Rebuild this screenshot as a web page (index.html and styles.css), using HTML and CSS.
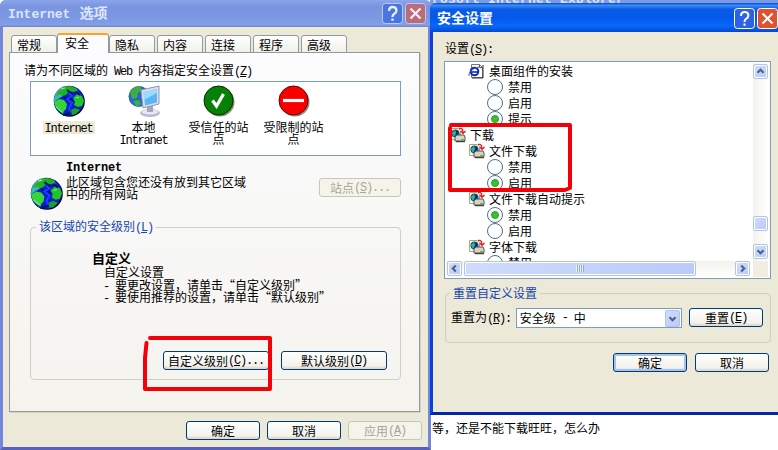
FILE: index.html
```
<!DOCTYPE html>
<html lang="zh-CN">
<head>
    <meta charset="UTF-8">
    <title>Internet 选项</title>
    <link rel="stylesheet" href="styles.css">
</head>
<body>
    <svg class="defs" width="0" height="0">
        <symbol id="globe" viewBox="0 0 32 32">
            <circle cx="16.5" cy="16.5" r="15.3" fill="#002"/>
            <circle cx="15.7" cy="15.7" r="15" fill="#0a1fc4"/>
            <path d="M1 14C2 7 7 2 13 1l3 2-5 3-1 5-5 3-4 3z" fill="#3ab9b0"/>
            <path d="M5 7l6-5 6-1 6 2 2 3-5 1-4-1-3 4-4 1-2-2-4 2z" fill="#22b21c"/>
            <path d="M1 17l5-3 5 1 3 4-1 5-2 2-1 3-5-4-3-4z" fill="#35d437"/>
            <path d="M20 13l4-4 5 2 2 5-2 5-4 1-4-2 1-3z" fill="#21c427"/>
            <path d="M18 25l4-2 5 2-4 4-4 1z" fill="#1aa320"/>
            <path d="M14 5l5 4-2 4 3 3M11 12l5 3M22 7l5 3M10 30l7-2" stroke="#031274" stroke-width="2" fill="none"/>
            <path d="M15 8l4 3-5 3 5 4-3 5 2 4" stroke="#1740ff" stroke-width="2" fill="none"/>
            <path d="M3 22l6 5M8 4l4-1M23 13l3-1" stroke="#8ff29a" fill="none"/>
        </symbol>
        <symbol id="dl" viewBox="0 0 17 16">
            <path d="M1.5 1.5h8l2 2v9h-10z" fill="#fffce6" stroke="#aaa476"/>
            <circle cx="6.5" cy="6.5" r="4" fill="#15498a"/>
            <path d="M3 6l3-3 1 3-2 4z" fill="#29b7a1"/>
            <path d="M8 4v6" stroke="#021" />
            <path d="M6 10l2-2h7l1 2v4H6z" fill="#d6d4c3" stroke="#55554b"/>
            <path d="M7 14.700h9" stroke="#222"/>
            <path d="M12.500 12.500h2" stroke="#2a2"/>
            <path d="M10 1.500q4-1 4 4M12 4l2 2.500L16.500 4" fill="none" stroke="#e8202a" stroke-width="1.300"/>
        </symbol>
    </svg>

    <div class="behind">rosoft Internet Explorer</div>
    <p class="note">等，还是不能下载旺旺，怎么办</p>

    <div class="win options">
        <div class="title">
            <h1><span class="en">Internet</span>选项</h1>
            <svg class="cap" viewBox="0 0 21 21"><rect x=".5" y=".5" width="20" height="20" rx="3" fill="#4c74e0" stroke="#b8cbf6"/><path d="M7 8q0-4 3.700-4t3.700 3.500q0 2-2 3.200T10.500 14M10.500 15.500v2.300" fill="none" stroke="#e7efff" stroke-width="2.300"/></svg>
            <svg class="cap" viewBox="0 0 21 21"><rect x=".5" y=".5" width="20" height="20" rx="3" fill="#bc6b78" stroke="#b8cbf6"/><path d="M5.500 5.500l10 10M15.500 5.500l-10 10" stroke="#f5eef5" stroke-width="2.300"/></svg>
        </div>
        <div class="tabs">
            <span>常规</span><span class="on">安全</span><span>隐私</span><span>内容</span><span>连接</span><span>程序</span><span>高级</span>
        </div>
        <div class="panel">
            <p class="hint">请为不同区域的<i> Web </i>内容指定安全设置<i>(<u>Z</u>)</i></p>
            <div class="zones">
                <div class="zone sel">
                    <svg><use href="#globe"/></svg>
                    <p><i>Internet</i></p>
                </div>
                <div class="zone">
                    <svg viewBox="0 0 32 32">
                        <circle cx="11" cy="11.500" r="10.500" fill="#2468c9"/>
                        <path d="M2 7q4-6 10-6l2 4-4 3-1 5-5 1zM5 16l6-1 2 4-4 3z" fill="#3fae3e"/>
                        <ellipse cx="22" cy="28" rx="10" ry="4" fill="#b9b9cf"/>
                        <ellipse cx="22" cy="27" rx="8" ry="2.500" fill="#e8e8f3"/>
                        <path d="M19 21h6v6h-6z" fill="#a5a6c2"/>
                        <path d="M13 5l18-4v18l-16 4z" fill="#dcdff0" stroke="#9093b7"/>
                        <path d="M15.500 7L29 4v13.500L17 20.500z" fill="#5bb5f4"/>
                        <path d="M15.500 7L29 4v4L16 15z" fill="#9adbfb"/>
                    </svg>
                    <p>本地<br><i>Intranet</i></p>
                </div>
                <div class="zone">
                    <svg viewBox="0 0 32 32"><circle cx="17" cy="17" r="14.500" fill="#8d8a7c"/><circle cx="15.500" cy="15.500" r="14.500" fill="#078007" stroke="#032d03"/><path d="M9.500 15.500l4 5.500 7-12" fill="none" stroke="#fff" stroke-width="3.200"/></svg>
                    <p>受信任的站<br>点</p>
                </div>
                <div class="zone">
                    <svg viewBox="0 0 32 32"><circle cx="17" cy="17" r="14.500" fill="#8d8a7c"/><circle cx="15.500" cy="15.500" r="14.500" fill="#fb0000" stroke="#5c0808"/><path d="M5 15.500h21" stroke="#fff" stroke-width="3.200"/></svg>
                    <p>受限制的站<br>点</p>
                </div>
            </div>
            <div class="about">
                <svg><use href="#globe"/></svg>
                <div class="desc">
                    <b class="en">Internet</b>
                    <p>此区域包含您还没有放到其它区域<br>中的所有网站</p>
                </div>
                <span class="btn off wide">站点<i>(<u>S</u>)...</i></span>
            </div>
            <div class="group level">
                <span class="legend">该区域的安全级别<i>(<u>L</u>)</i></span>
                <h2>自定义</h2>
                <p class="custom">自定义设置</p>
                <p class="custom"><i>- </i>要更改设置，请单击“自定义级别”<br><i>- </i>要使用推荐的设置，请单击“默认级别”</p>
                <div class="row">
                    <span class="btn">自定义级别<i>(<u>C</u>)...</i></span>
                    <span class="btn">默认级别<i>(<u>D</u>)</i></span>
                </div>
            </div>
        </div>
        <div class="foot">
            <span class="btn">确定</span>
            <span class="btn">取消</span>
            <span class="btn off">应用<i>(<u>A</u>)</i></span>
        </div>
    </div>

    <div class="win settings">
        <div class="title">
            <h1>安全设置</h1>
            <svg class="cap" viewBox="0 0 21 21"><rect x=".5" y=".5" width="20" height="20" rx="3" fill="#2f61e8" stroke="#fff"/><path d="M7 8q0-4 3.700-4t3.700 3.500q0 2-2 3.200T10.500 14M10.500 15.500v2.300" fill="none" stroke="#fff" stroke-width="2"/></svg>
            <svg class="cap" viewBox="0 0 21 21"><rect x=".5" y=".5" width="20" height="20" rx="3" fill="#e2512d" stroke="#fff"/><path d="M5.500 5.500l10 10M15.500 5.500l-10 10" stroke="#fff" stroke-width="2.200"/></svg>
        </div>
        <p class="label">设置<i>(<u>S</u>):</i></p>
        <div class="list">
            <div class="items">
                <div class="item sub">
                    <svg viewBox="0 0 17 16"><path d="M3.500 1.500h8l3 3v10h-11z" fill="#fff" stroke="#777"/><path d="M11.500 1.500v3h3" fill="none" stroke="#555"/><path d="M15 2v13H4" fill="none" stroke="#333"/><circle cx="6.500" cy="8.500" r="3.800" fill="none" stroke="#1528b4" stroke-width="2"/><path d="M3 9h7.500" stroke="#1528b4" stroke-width="1.600"/><path d="M1 13q-1-3 3-6t7-3" stroke="#3a62e0" fill="none"/></svg>桌面组件的安装
                </div>
                <div class="item"><span class="radio"></span>禁用</div>
                <div class="item"><span class="radio"></span>启用</div>
                <div class="item"><span class="radio on"></span>提示</div>
                <div class="item top"><svg><use href="#dl"/></svg>下载</div>
                <div class="item sub"><svg><use href="#dl"/></svg>文件下载</div>
                <div class="item"><span class="radio"></span>禁用</div>
                <div class="item"><span class="radio on"></span>启用</div>
                <div class="item sub"><svg><use href="#dl"/></svg>文件下载自动提示</div>
                <div class="item"><span class="radio on"></span>禁用</div>
                <div class="item"><span class="radio"></span>启用</div>
                <div class="item sub"><svg><use href="#dl"/></svg>字体下载</div>
                <div class="item"><span class="radio"></span>禁用</div>
            </div>
            <div class="vbar">
                <svg class="sb" viewBox="0 0 15 15"><path d="M4 9l3.500-3.500L11 9"/></svg>
                <span class="sb thumb"></span>
                <svg class="sb" viewBox="0 0 15 15"><path d="M4 6l3.500 3.500L11 6"/></svg>
            </div>
            <div class="hbar">
                <svg class="sb" viewBox="0 0 15 15"><path d="M9 4L5.500 7.500 9 11"/></svg>
                <span class="sb thumb"><em></em></span>
                <svg class="sb" viewBox="0 0 15 15"><path d="M6 4l3.500 3.500L6 11"/></svg>
            </div>
            <div class="corner"></div>
        </div>
        <div class="group reset">
            <span class="legend">重置自定义设置</span>
            <span class="to">重置为<i>(<u>R</u>):</i></span>
            <span class="select">安全级<i> - </i>中<svg class="sb" viewBox="0 0 15 17"><path d="M4 7l3.500 3.500L11 7"/></svg></span>
            <span class="btn">重置<i>(<u>E</u>)</i></span>
        </div>
        <div class="foot">
            <span class="btn def">确定</span>
            <span class="btn">取消</span>
        </div>
    </div>

    <!-- red pen marks -->
    <svg class="marks" width="778" height="450">
        <path d="M150 338H270V389H145V358L146.500 343" />
        <path d="M451 125H570V188L565 190H450V128" />
    </svg>
</body>
</html>
```

FILE: styles.css
```
* {
    box-sizing: border-box;
}
body {
    margin: 0;
    width: 778px;
    height: 450px;
    overflow: hidden;
    position: relative;
    background: #fff;
    color: #000;
    font: 12px/12px "Noto Sans CJK SC", sans-serif;
}
p, h1, h2 {
    margin: 0;
}
svg {
    display: block;
    flex: none;
}
.defs, .marks {
    position: absolute;
    left: 0;
    top: 0;
}
.marks path {
    fill: none;
    stroke: #f40008;
    stroke-width: 4;
    stroke-linecap: round;
    stroke-linejoin: round;
}

/* half width latin letters, 6px each */
i {
    font: 12px/0 "Liberation Mono", monospace;
    letter-spacing: -1.2px;
    white-space: pre;
}
u {
    text-underline-offset: 1px;
}
.en {
    font-family: "Liberation Mono", monospace;
    font-weight: bold;
}

.behind {
    position: absolute;
    left: 430px;
    top: 0;
    width: 348px;
    height: 12px;
    overflow: hidden;
    background: #7b9ae6;
    color: #dbe6fb;
    font: bold 13px/0 "Liberation Mono", monospace;
    letter-spacing: 0.2px;
    white-space: nowrap;
    padding-left: 2px;
}
.note {
    position: absolute;
    left: 432px;
    top: 422px;
}

.win {
    position: absolute;
    background: #ece9d8;
}
.title {
    display: flex;
    align-items: center;
}
.title h1 {
    flex: 1;
    font-size: 14px;
    line-height: 20px;
}
.title .en {
    font-size: 13px;
    margin-right: 9px;
}
.cap {
    width: 21px;
    height: 21px;
    margin-left: 2px;
}

.options {
    left: 0;
    top: 0;
    width: 431px;
    height: 450px;
    border: 3px solid #7385dc;
    border-top: 0;
    border-bottom-color: #5960bb;
    border-radius: 6px 6px 0 0;
}
.options .title {
    height: 27px;
    margin: 0 -3px;
    padding: 0 5px 0 8px;
    border-radius: 6px 6px 0 0;
    background: linear-gradient(#8ba6ea, #7a94e0 25%, #7d99e4 75%, #839fe8 92%, #6d82cf);
    color: #dbe6fb;
}
.tabs {
    display: flex;
    align-items: flex-end;
    gap: 2px;
    height: 26px;
    padding-left: 8px;
    position: relative;
    z-index: 1;
}
.tabs span {
    width: 46px;
    height: 18px;
    padding: 3px 0 0 5px;
    border: 1px solid #919b9c;
    border-radius: 3px 3px 0 0;
    background: linear-gradient(#fff, #f0f0ea);
}
.tabs .on {
    width: 52px;
    height: 20px;
    margin: 0 -2px;
    padding: 2px 0 0 7px;
    border-top: 2px solid #f5a52b;
    border-bottom: 0;
    background: #fcfcfe;
}
.panel {
    width: 411px;
    height: 360px;
    margin: -1px 0 0 6px;
    padding: 11px 18px 0 20px;
    border: 1px solid #919b9c;
    box-shadow: 1px 1px #d5d0c0;
    background: linear-gradient(#fcfcfe, #f4f3ee);
}
.hint {
    margin-left: -6px;
}
.zones {
    display: flex;
    height: 75px;
    margin-top: 5px;
    padding-top: 3px;
    border: 1px solid #7f9db9;
    background: #fff;
}
.zone {
    width: 75px;
    text-align: center;
}
.zone svg {
    width: 32px;
    height: 32px;
    margin: 0 auto 4px 22px;
}
.sel p {
    width: 52px;
    height: 13px;
    margin: 0 auto;
    background: #ece9d8;
}
.about {
    display: flex;
    margin-top: 6px;
    height: 46px;
}
.about svg {
    width: 33px;
    height: 33px;
    margin-top: 15px;
}
.desc {
    flex: 1;
    margin-left: 3px;
}
.desc .en {
    display: block;
    font-size: 12px;
    letter-spacing: -0.2px;
}
.desc p {
    margin-top: 2px;
}
.about .btn {
    margin-top: 16px;
}

.btn {
    display: flex;
    align-items: center;
    justify-content: center;
    width: 74px;
    height: 19px;
    border: 1px solid #003c74;
    border-radius: 3px;
    background: linear-gradient(#fff, #f3f2ed 80%, #d9d4c9);
}
.btn.def {
    box-shadow: inset 0 0 0 2px #a6c2f0;
}
.btn.off {
    color: #a8a598;
    border-color: #c9c7ba;
    background: #f5f4ea;
}
.btn.wide {
    width: 82px;
}
.group {
    position: relative;
    border: 1px solid #d0d0bf;
    border-radius: 4px;
}
.legend {
    position: absolute;
    left: 5px;
    top: -8px;
    padding: 0 3px;
    color: #1846ad;
    background: #f8f7f6;
}
.level {
    height: 153px;
    margin-top: 19px;
    padding: 23px 13px 0 61px;
}
.level h2 {
    font-size: 13px;
    line-height: 13px;
}
.custom {
    margin-left: 11px;
    white-space: nowrap;
}
.level h2 + .custom {
    margin: 2px 0 1px 12px;
}
.level .row {
    display: flex;
    justify-content: flex-end;
    gap: 12px;
    margin-top: 48px;
}
.level .btn {
    width: 106px;
}
.foot {
    display: flex;
    justify-content: flex-end;
    gap: 7px;
}
.options .foot {
    margin: 9px 6px 0 0;
}

.settings {
    left: 430px;
    top: 3px;
    width: 351px;
    height: 412px;
    border: 3px solid #0842d8;
    border-top: 0;
    border-bottom-color: #0226ad;
    border-radius: 6px 0 0 0;
}
.settings .title {
    height: 29px;
    margin: 0 -3px;
    padding: 1px 3px 0 7px;
    border-radius: 6px 0 0 0;
    background: linear-gradient(#0a49c8, #3a8cf8 8%, #0a5ae6 22%, #0558ea 50%, #0767fd 80%, #0448ce);
    color: #fff;
}
.settings h1 {
    line-height: 18px;
    margin-top: -2px;
}
.label {
    margin: 10px 0 0 12px;
}
.list {
    display: grid;
    grid-template: 198px 16px / 304px 15px;
    width: 327px;
    height: 218px;
    margin: 7px 0 0 11px;
    padding: 1px;
    column-gap: 3px;
    border: 1px solid #7f9db9;
    background: #fff;
}
.items {
    overflow: hidden;
}
.item {
    display: flex;
    align-items: center;
    height: 16px;
    padding-left: 41px;
    white-space: nowrap;
}
.item svg {
    width: 17px;
    height: 16px;
    margin-right: 4px;
}
.item.sub {
    padding-left: 22px;
}
.item.top {
    padding-left: 3px;
}
.radio {
    width: 16px;
    height: 16px;
    margin-right: 5px;
    border: 1px solid #4d708f;
    border-radius: 50%;
    background: #fff;
}
.radio.on {
    background: radial-gradient(#43c33e 0, #35b132 3.5px, #fff 4.5px);
}
.vbar {
    display: flex;
    flex-direction: column;
    padding: 1px 0 2px;
    background: linear-gradient(90deg, #f3f2ec, #fff);
}
.vbar .thumb {
    margin: auto 0 13px;
}
.hbar {
    display: flex;
    width: 304px;
    padding-left: 1px;
    background: linear-gradient(#f3f2ec, #fff);
}
.hbar .thumb {
    width: 232px;
    margin: 0 auto 0 2px;
}
.thumb em {
    width: 8px;
    height: 7px;
    margin: 3px auto;
    display: block;
    background: repeating-linear-gradient(90deg, #eef4fe 0 1px, #8fa8e4 1px 2px);
}
.corner {
    background: #f0eee2;
}
.sb {
    width: 15px;
    height: 15px;
    flex: none;
    border: 1px solid #b0c2ee;
    border-radius: 2px;
    box-shadow: inset 0 0 0 1px #fff;
    background: linear-gradient(135deg, #cfdcfe, #bacafa);
}
.sb path {
    fill: none;
    stroke: #4d6185;
    stroke-width: 2.4;
}
.reset {
    display: flex;
    width: 326px;
    height: 50px;
    margin: 14px 0 0 12px;
    padding: 14px 7px 0 5px;
}
.reset .legend {
    left: 4px;
    top: -7px;
    background: #ece9d8;
}
.to {
    width: 65px;
    padding-top: 3px;
}
.select {
    display: flex;
    align-items: center;
    width: 167px;
    height: 20px;
    margin-right: 7px;
    padding: 0 1px 0 3px;
    border: 1px solid #7f9db9;
    background: #fff;
}
.select .sb {
    height: 17px;
    margin-left: auto;
    box-shadow: none;
}
.settings .foot {
    gap: 8px;
    margin: 10px 9px 0 0;
}
```
